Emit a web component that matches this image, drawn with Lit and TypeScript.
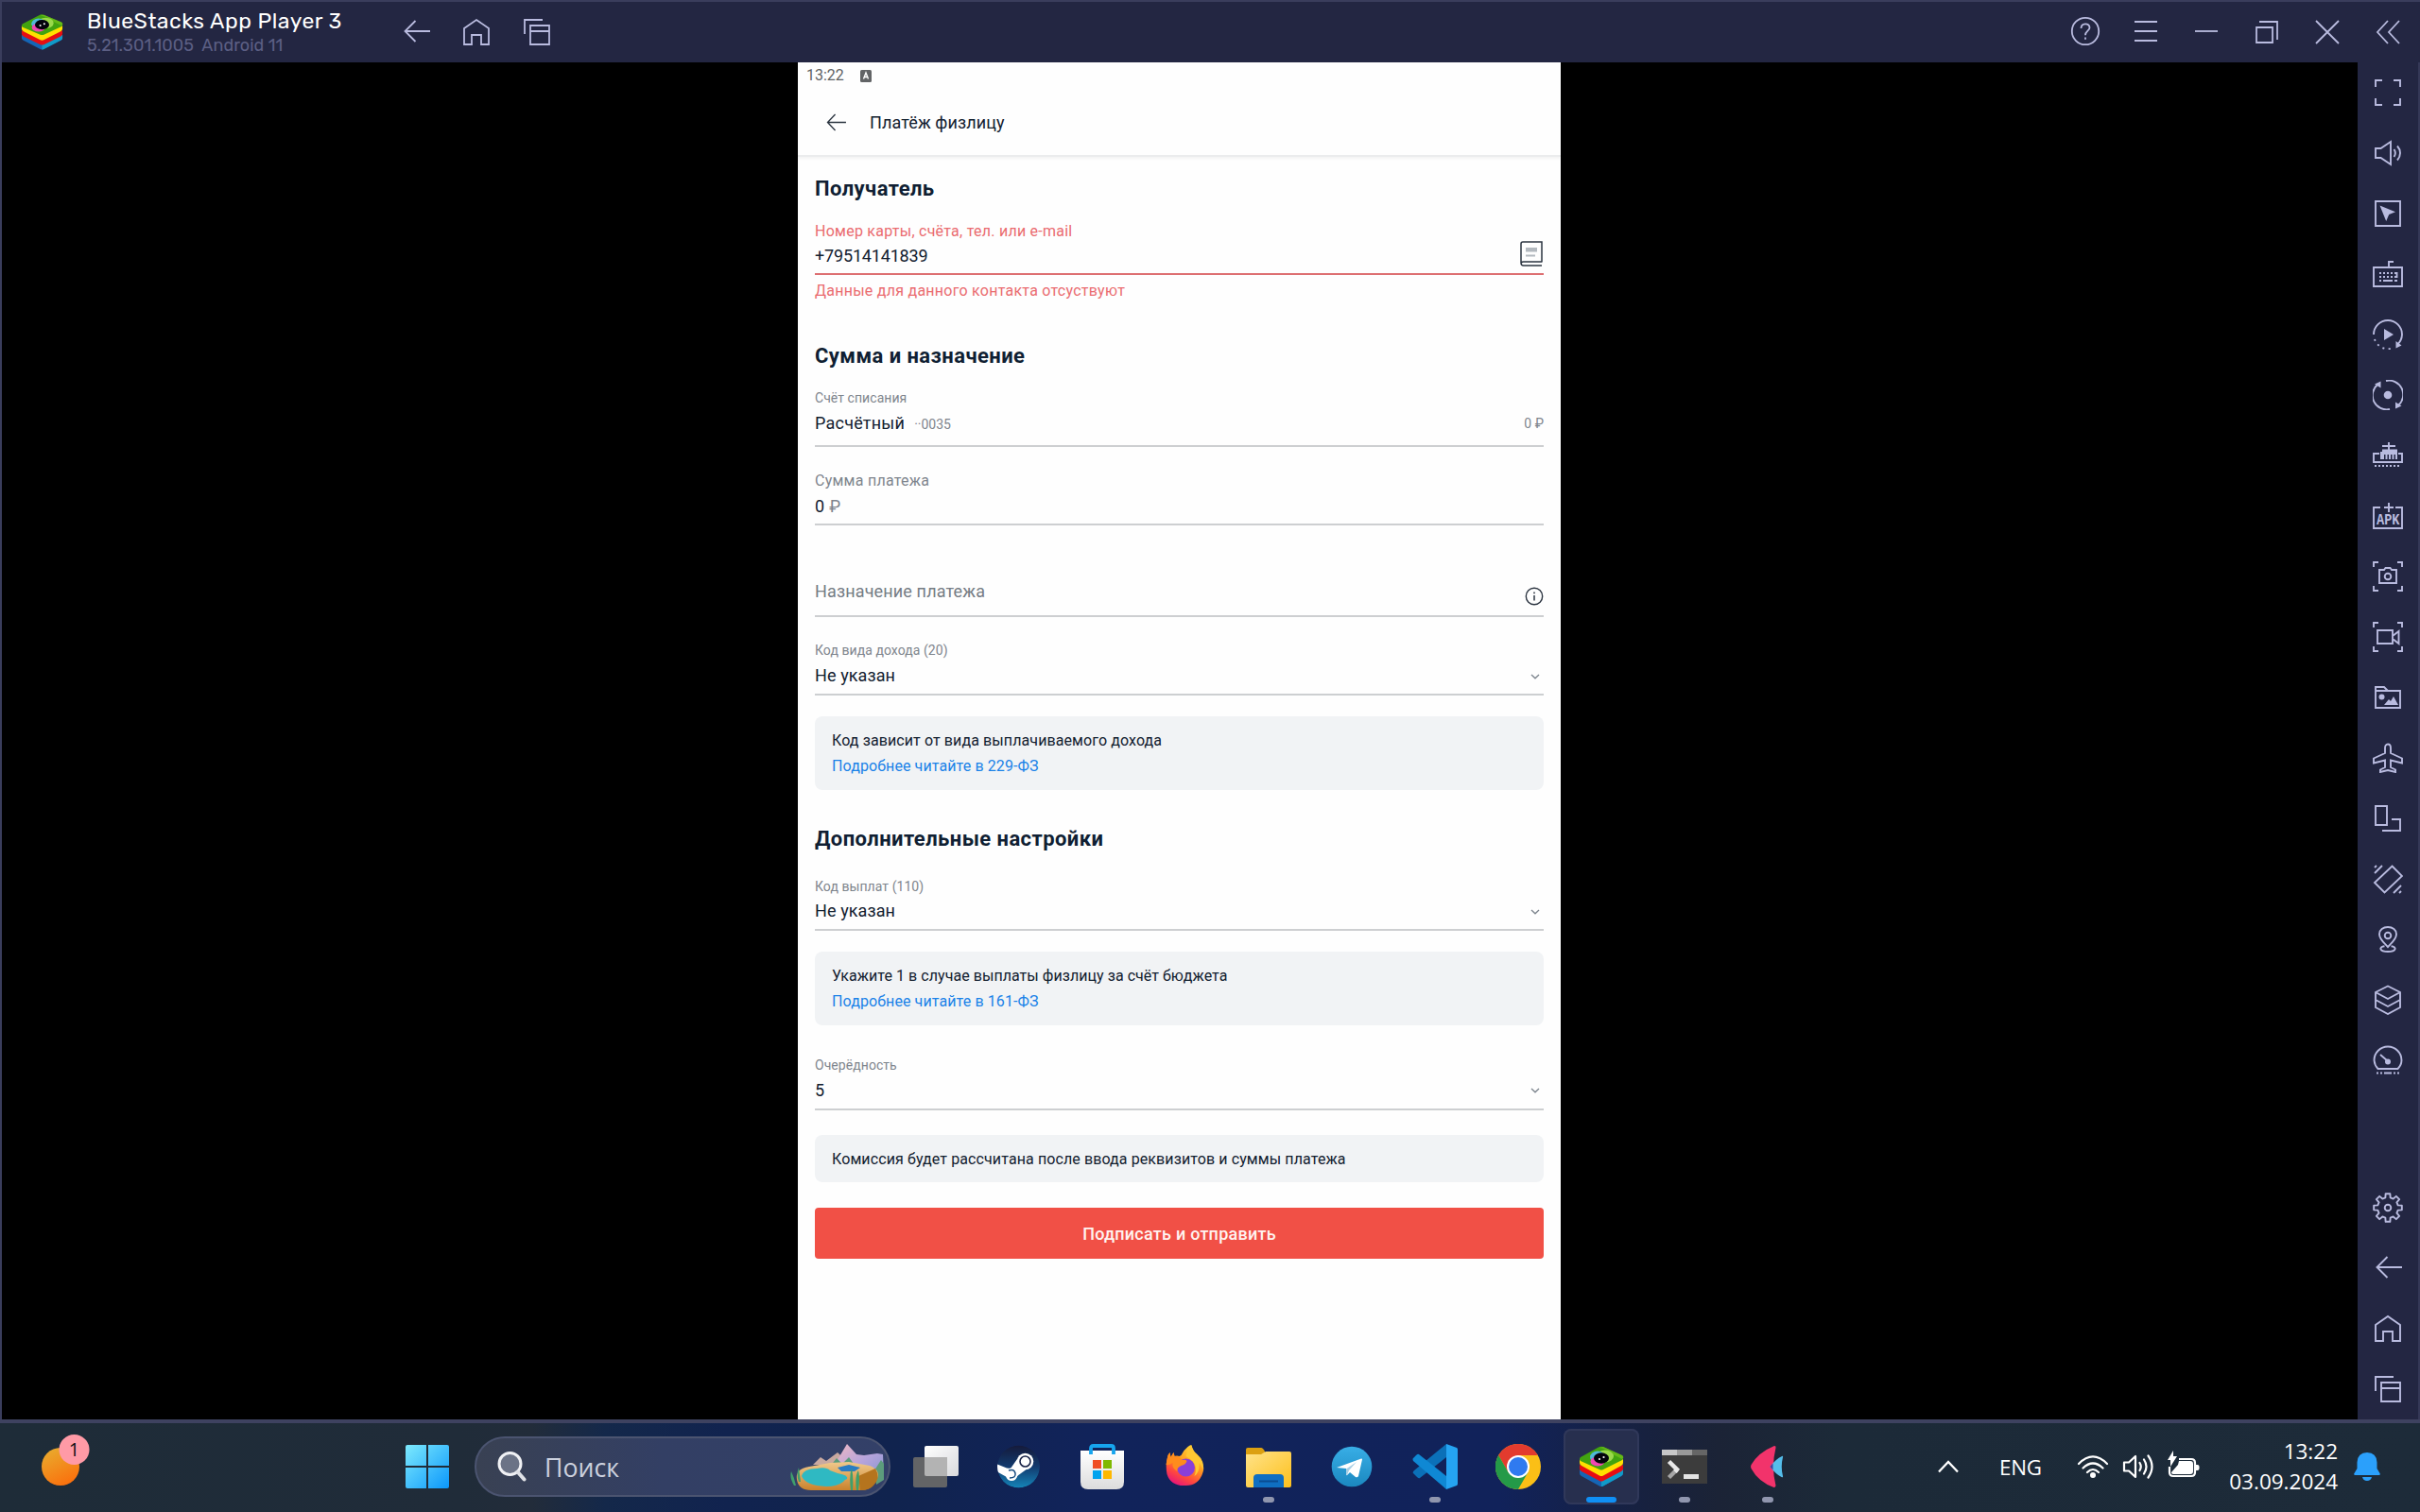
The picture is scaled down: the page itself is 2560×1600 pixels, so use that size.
import { LitElement, html, css, svg, TemplateResult, SVGTemplateResult } from "lit";
import { customElement } from "lit/decorators.js";

type Glyph = SVGTemplateResult;

/* Closed outline of a gear centred on the 32 x 32 grid. */
function gearPath(teeth: number, outer: number, inner: number): string {
  const step = 360 / teeth;
  const pts: string[] = [];
  for (let i = 0; i < teeth; i++) {
    for (const [offset, r] of [[-14, inner], [-9, outer], [9, outer], [14, inner]]) {
      const a = ((i * step + offset - 90) * Math.PI) / 180;
      pts.push(`${(16 + r * Math.cos(a)).toFixed(2)} ${(16 + r * Math.sin(a)).toFixed(2)}`);
    }
  }
  return `M${pts.join("L")}z`;
}

/* Outline glyphs, all drawn on a 32 x 32 grid. */
const home = svg`<path d="M3 29V12L16 3l13 9v17h-8V19H11v10z"/>`;
const copies = svg`<path d="M22 3H3v15M9 9h20v20H9zM9 15h20"/>`;
const back = svg`<path d="M31 15H5M15.500 4L4.500 15l11 11"/>`;
const help = svg`<circle cx="16" cy="16" r="14.2"/><path d="M11.500 13c0-6 9-6 9-.8 0 3.600-4.500 3.400-4.500 8M16 22.500v2.200"/>`;
const menu = svg`<path d="M4 6h24M4 16h24M4 26h24"/>`;
const minimize = svg`<path d="M4 16h24"/>`;
const restore = svg`<path d="M5 12h17v16H5zM8 6h19v19"/>`;
const close = svg`<path d="M4 5l24 24M28 5L4 29"/>`;
const collapse = svg`<path d="M16 5L5 17l11 12M28 5L17 17l11 12"/>`;

const fullscreen = svg`<path d="M3 10V3h7M22 3h7v7M29 22v7h-7M10 29H3v-7"/>`;
const volume = svg`<path d="M3 11h5.500L19 4v24L8.500 21H3zM22.500 12c1.700 2.500 1.700 5.500 0 8M26 8.500c4 4.500 4 10.500 0 15"/>`;
const cursor = svg`<path d="M3 3h26v26H3z"/><path class="solid" d="M7.500 7.500L24 14.300l-6.800 2.600-3 7z"/>`;
const keyboard = svg`<path d="M1 9h30v20H1zM17 9V3h5"/><path stroke-dasharray="2 2" d="M7 15h18M7 19h18"/><path d="M7 23h2M11 23h10M23 23h3M25.500 14v6"/>`;
const macroPlay = svg`<path d="M1 16a15 15 0 0 1 30 0c0 4-1.500 7-4.500 10.500"/><path stroke-dasharray="2 4.300" d="M2 21a15 15 0 0 0 20 9"/><path class="solid" d="M12 10l10 6-10 6zM24.500 23v7.500l6-3z"/>`;
const record = svg`<path d="M14 1a15 15 0 0 1 13 26M18 31A15 15 0 0 1 5 5"/><circle class="solid" cx="16" cy="16" r="4.300"/><path class="solid" d="M24 23.500v7l6.500-3zM8.500 8.500v-7l-6.500 3z"/>`;
const instances = svg`<path d="M17 2v8M10 6h14M7 14H1v9h30v-9h-4"/><path class="solid" d="M8 20v-8h2V9.500h16V20h-2v-5h-1.500v5h-2v-5H19v5h-2v-5h-1.500v5h-2v-5H12v5z"/><path stroke-dasharray="2 2" d="M2 27h28"/>`;
const apk = svg`<path d="M8 7H1v22h30V7h-7M17 2v10M12 7h10"/><text class="apk" x="4" y="25" textLength="24.500" lengthAdjust="spacingAndGlyphs">APK</text>`;
const camera = svg`<path d="M1 6V1h5M26 1h5v5M31 26v5h-5M6 31H1v-5M7 9h5l1.500-2h5L20 9h5v14H7z"/><circle cx="16" cy="16" r="3.300"/>`;
const video = svg`<path d="M1 6V1h5M26 1h5v5M31 26v5h-5M6 31H1v-5M5 9h16v14H5zM21 15l6.500-5v13L21 18z"/>`;
const media = svg`<path d="M3 27V5h9l4 4h13v18zM3 9h13"/><circle class="solid" cx="9.500" cy="15.500" r="3"/><path class="solid" d="M12 24l5-6 2 2 3-5 5 9z"/>`;
const plane = svg`<path d="M16 1.500c2 0 3 2 3 4v5.500l12 5.500v5L19 18.500V26l5 2.500V31l-8-2-8 2v-2.500l5-2.500v-7.500L1 21.500v-5l12-5.500V5.500c0-2 1-4 3-4z"/>`;
const sync = svg`<path d="M3 3h12v20H3zM20 17h9v12H10"/>`;
const shake = svg`<path d="M20.500 2.500L31 13 12.500 30.500 2 20zM2 10l8-8M2 4l2-2M22 31l8-8M28 31l2-2"/>`;
const pin = svg`<path d="M16 24c-4-4.500-9-8-9-13.500C7 6 11 3 16 3s9 3 9 7.500c0 5.500-5 9-9 13.500z"/><circle cx="16" cy="12" r="3.300"/><path d="M12.500 23.300C6 24 7 29 16 29s10-5 3.500-5.700"/>`;
const layers = svg`<path d="M3 8l13-6.500L29 8v16l-13 7-13-7zM3 8l13 7 13-7M3 16l13 7 13-7"/>`;
const gauge = svg`<path d="M5.500 25A15 15 0 0 1 1.500 16a14.500 14.500 0 0 1 29 0c0 3.500-1.500 6.500-4 9zM8 10l8 7"/><circle class="solid" cx="16" cy="17.500" r="3"/><path stroke-dasharray="2 2 2 2 8 2 2 2 2 2" d="M4 29.500h25"/>`;
const gear = svg`<path stroke-linejoin="round" d=${gearPath(8, 15, 11)}/><circle cx="16" cy="16" r="3.300"/>`;

const outline = (g: Glyph): TemplateResult => html`<svg class="ico" viewBox="0 0 32 32">${g}</svg>`;

/* App logos for the taskbar, drawn on a 48 x 48 grid. */
const stack = svg`
  <path fill="#1565b5" d="M1 31v-4l23 10 23-10v4q0 2-2 3L26 44.500q-2 1-4 0L3 34q-2-1-2-3z"/>
  <path fill="#109ac8" d="M24 38l23-11v4q0 2-2 3L26 44.500q-1 .6-2 .6z"/>
  <path fill="#e60d12" d="M1 26v-4l23 10 23-10v4q0 2-2 3L26 39q-2 1-4 0L3 29q-2-1-2-3z"/>
  <path fill="#ffe000" d="M1 20v-4l23 10 23-10v4q0 2-2 3L26 33.500q-2 1-4 0L3 23q-2-1-2-3z"/>
  <path fill="#41a30f" d="M2 14L20 4q3-2 6-1l20 9q2.500 2 0 5L26 27q-2 1-4 0L2 18q-2-2 0-4z"/>
  <path fill="#7cc81c" d="M26 3l20 9q2.500 2 0 4L34 10q-4-5-12-6z" opacity=".6"/>
  <ellipse cx="28" cy="13" rx="9" ry="6.500" fill="#9ad84a"/>
  <ellipse cx="20" cy="14" rx="8" ry="6.500" fill="#4fb8d8"/>
  <ellipse cx="20" cy="18.500" rx="7.500" ry="5" fill="#f047b2"/>
  <ellipse cx="24" cy="15" rx="8" ry="5.800" fill="#04040c"/>
  <circle cx="22" cy="16" r="1.100" fill="#fff"/><circle cx="26.500" cy="14" r="1.100" fill="#fff"/>`;

const taskView = svg`
  <defs><linearGradient id="tv" x2="1" y2="1"><stop stop-color="#fff"/><stop offset="1" stop-color="#d9dadd"/></linearGradient></defs>
  <rect x="12" y="2" width="36" height="32" rx="2" fill="url(#tv)"/>
  <rect x="0" y="14" width="36" height="32" rx="2" fill="#6d6b68" opacity=".9"/>
  <path d="M12 14h24v20H14q-2 0-2-2z" fill="#b3b3b3"/>`;
const steam = svg`
  <defs><linearGradient id="st" x2="0" y2="1"><stop stop-color="#151a3a"/><stop offset=".5" stop-color="#123a6e"/><stop offset="1" stop-color="#1585b8"/></linearGradient>
  <clipPath id="stc"><circle cx="23.500" cy="24" r="22.500"/></clipPath></defs>
  <g clip-path="url(#stc)"><circle cx="23.500" cy="24" r="22.500" fill="url(#st)"/>
  <path fill="#fff" d="M0 21l11 4.500 4 .5 7-10 11 10-11 8q-1 5-6 5-4 0-6-4.500L0 29z"/>
  <circle cx="30.500" cy="18.500" r="8.800" fill="#fff"/><circle cx="30.500" cy="18.500" r="5.500" fill="none" stroke="#1a2448" stroke-width="1.600"/>
  <circle cx="16.500" cy="31.500" r="6.300" fill="#fff"/><path d="M13 28q6-2 7 3t-6 5" fill="none" stroke="#174c80" stroke-width="1.500"/></g>`;
const store = svg`
  <defs><linearGradient id="so" x2="0" y2="1"><stop stop-color="#fff"/><stop offset="1" stop-color="#dcdcdc"/></linearGradient></defs>
  <path fill="url(#so)" d="M1 7h46v33q0 8-8 8H9q-8 0-8-8z"/>
  <path fill="none" stroke="#16a5ee" stroke-width="3.800" d="M12 11V4.500q0-2.500 2.500-2.500h19q2.500 0 2.500 2.500V11"/>
  <path fill="#f04e23" d="M14 17h9v9h-9z"/><path fill="#7fb900" d="M25 17h9v9h-9z"/><path fill="#00a3ee" d="M14 28h9v9h-9z"/><path fill="#feb800" d="M25 28h9v9h-9z"/>`;
const firefox = svg`
  <defs><linearGradient id="ff" x1=".8" y1="0" x2=".3" y2="1"><stop stop-color="#ffe43a"/><stop offset=".45" stop-color="#ff9a1f"/><stop offset=".75" stop-color="#ff4a3c"/><stop offset="1" stop-color="#e8157a"/></linearGradient></defs>
  <g transform="translate(.5 0)"><path fill="url(#ff)" d="M5 12l2-3 1 5 3-5 1 4q3-1 5 0l2-1q2-5 7-9l3-2 4 8 3 3q9 9 6 18-4 14-18 14Q8 45 4 32 2 21 5 12z"/>
  <circle cx="24" cy="25" r="9.500" fill="#8a3fd8"/>
  <path fill="#ff8c1c" d="M5 12l2-3 1 5 3-5 1 4q4-1 8 4 4-1 5 1-1 4-6 5-5 2-4 6-6-3-5-9-5 3-7 2z"/>
  <path fill="#ffc832" d="M24 13l2-8q1-2 4-4 1 6 6 10 8 7 6 16-2-5-4-7 1 10-5 14 3-8 0-13-3-5-9-8z"/></g>`;
const folder = svg`
  <defs><linearGradient id="fo" x2="1" y2="1"><stop stop-color="#ffe38a"/><stop offset="1" stop-color="#fdc01c"/></linearGradient></defs>
  <path fill="#dca011" d="M0 6q0-2 2-2h14q2 0 4 4v4H0z"/>
  <path fill="url(#fo)" d="M0 11h16l5-3h25q2 0 2 2v34q0 2-2 2H2q-2 0-2-2z"/>
  <path fill="#0f6fc2" d="M8 46V36q0-4 4-4h24q4 0 4 4v10z"/><path stroke="#0a4c92" stroke-width="2" d="M14 39.500h20"/>`;
const telegram = svg`
  <defs><linearGradient id="tg" x2="0" y2="1"><stop stop-color="#38aee6"/><stop offset="1" stop-color="#1b88c0"/></linearGradient></defs>
  <circle cx="24" cy="24" r="21.300" fill="url(#tg)"/>
  <path fill="#fff" d="M8 25l26-9.500q1-.3 1 1L31 34q-1 2-3 1l-6-5-3 3q-1 .5-1-1v-6z"/>
  <path fill="#a9cfe4" d="M18 26.500L29 19l-8 9-2 5q-1 0-1-1z"/>`;
const vscode = svg`
  <path fill="#0b70b8" d="M36 0v14L8 36q-1 1-3-1l-4-4q-1-1 1-3z"/>
  <path fill="#0f88d4" d="M36 48V34L7 11q-1-1-3 1l-3 3q-1 1 0 3z"/>
  <path fill="#25a4f2" d="M36 0l11 4q1 .5 1 2v36q0 1.500-1 2l-11 4z"/>`;
const chrome = svg`
  <circle cx="24" cy="24" r="24" fill="#fbbf16"/>
  <path fill="#e33b2e" d="M3.200 12A24 24 0 0 1 44.800 12H24L13.600 30z"/>
  <path fill="#249a48" d="M3.200 12A24 24 0 0 0 24 48l10.400-18H24L13.600 30z"/>
  <circle cx="24" cy="24" r="12" fill="#fff"/><circle cx="24" cy="24" r="10" fill="#2f7af0"/>`;
const terminal = svg`
  <path fill="#3c3c3c" d="M0 6h48v36H0z"/><path fill="#c6c6c6" d="M0 6h16v6H0z"/><path fill="#999" d="M16 6h16v6H16z"/><path fill="#666" d="M32 6h16v6H32z"/>
  <path fill="none" stroke="#a6a6a6" stroke-width="4.500" d="M7.500 35.500L16 27"/><path fill="none" stroke="#e8e8e8" stroke-width="4.500" d="M7.500 18.500L16 27l-2 2.500"/>
  <path fill="#e3e3e3" d="M23 32h16v5H23z"/>`;
const fish = svg`
  <path fill="#f2336b" d="M31 2q2 0 1.500 2-5 20 0 40 0 2-2 2Q14 40 6.500 26q-1-2 0-4Q14 9 31 2z"/>
  <path fill="#55bdea" d="M39 13q1.500-1 1 1-2.500 10 0 20 .5 2-1.500 1-6-3-12-11 6-8 12.500-11z"/>
  <path fill="#4a3f9c" d="M26.500 24q2-3 3-3.500v7q-1-.5-3-3.500z"/>`;

interface App { name: string; art: Glyph; state: "idle" | "open" | "active"; }
const apps: App[] = [
  { name: "taskview", art: taskView, state: "idle" },
  { name: "steam", art: steam, state: "idle" },
  { name: "store", art: store, state: "idle" },
  { name: "firefox", art: firefox, state: "idle" },
  { name: "explorer", art: folder, state: "open" },
  { name: "telegram", art: telegram, state: "idle" },
  { name: "code", art: vscode, state: "open" },
  { name: "chrome", art: chrome, state: "idle" },
  { name: "bluestacks", art: stack, state: "active" },
  { name: "terminal", art: terminal, state: "open" },
  { name: "fish", art: fish, state: "open" },
];

@customElement("emulator-header")
class EmulatorHeader extends LitElement {
  static styles = css`
    :host { display: flex; align-items: center; height: 64px; padding: 0 18px 0 20px; background: #232642; color: #fff; font-family: Rubik, Roboto, sans-serif; }
    .logo { width: 45px; height: 42px; }
    .names { margin-left: 25px; width: 332px; }
    .title { font-size: 23px; line-height: 28px; letter-spacing: .48px; white-space: pre; }
    .version { font-size: 18px; line-height: 24px; color: #5c5f84; white-space: pre; letter-spacing: .04px; }
    .group { display: flex; gap: 32px; }
    .right { margin-left: auto; padding-bottom: 2px; }
    .ico { width: 32px; height: 32px; fill: none; stroke: #b9bbdf; stroke-width: 1.800; display: block; }
  `;
  render() {
    return html`
      <svg class="logo" viewBox="0 0 48 48" preserveAspectRatio="none">${stack}</svg>
      <div class="names">
        <div class="title">BlueStacks App Player 3</div>
        <div class="version">5.21.301.1005  Android 11</div>
      </div>
      <div class="group">${[back, home, copies].map(outline)}</div>
      <div class="group right">${[help, menu, minimize, restore, close, collapse].map(outline)}</div>`;
  }
}

@customElement("emulator-sidebar")
class EmulatorSidebar extends LitElement {
  static styles = css`
    :host { display: flex; flex-direction: column; justify-content: space-between; width: 66px; background: #232642; border-right: 2px solid #353857; box-sizing: border-box; }
    .cell { height: 64px; display: grid; place-items: center; }
    .ico { width: 32px; height: 32px; fill: none; stroke: #b9bbdf; stroke-width: 1.900; display: block; }
    .solid { fill: #b9bbdf; stroke: none; }
    .apk { fill: #b9bbdf; stroke: none; font: 700 16px "Liberation Mono", monospace; }
  `;
  render() {
    const cell = (g: Glyph) => html`<div class="cell">${outline(g)}</div>`;
    return html`
      <div>${[fullscreen, volume, cursor, keyboard, macroPlay, record, instances, apk, camera, video, media, plane, sync, shake, pin, layers, gauge].map(cell)}</div>
      <div>${[gear, back, home, copies].map(cell)}</div>`;
  }
}

@customElement("payment-screen")
class PaymentScreen extends LitElement {
  static styles = css`
    :host { display: block; width: 807px; height: 1436px; background: #fefefe; color: #12202f; font: 18px/24px Roboto, sans-serif; letter-spacing: .1px; }
    .status { display: flex; align-items: center; gap: 17px; height: 26px; padding: 2px 0 0 9px; box-sizing: border-box; font-size: 16px; color: #606264; letter-spacing: 0; }
    .status svg { width: 12px; height: 13px; }
    .bar { display: flex; align-items: center; height: 74px; padding-left: 30px; gap: 25px; box-sizing: border-box; border-bottom: 2px solid #ebeced; clip-path: inset(0 0 -6px 0); box-shadow: 0 2px 3px #f3f3f4; }
    .bar svg { width: 21px; height: 19px; margin-top: 3px; fill: none; stroke: #2b3440; stroke-width: 1.400; }
    .bar span { margin-top: 3px; }
    .form { padding: 0 18px; }
    h2 { margin: 0; font-size: 22px; line-height: 24px; font-weight: 700; letter-spacing: .43px; color: #101f33; }
    .h-recipient { margin-top: 22px; }
    .h-amount { margin-top: 45px; }
    .h-extra { margin-top: 40.500px; }
    .field { display: flex; flex-direction: column; border-bottom: 2px solid #cdcfd1; box-sizing: border-box; }
    .label { color: #7e858d; font-size: 14px; letter-spacing: .06px; }
    .label.big { font-size: 16px; letter-spacing: .25px; }
    .value { display: flex; align-items: center; justify-content: space-between; height: 24px; }
    .recipient { margin-top: 20.500px; height: 58.500px; gap: 2.500px; border-bottom: 2px solid #dd6f72; }
    .recipient .label { color: #ea6c70; }
    .recipient .value { letter-spacing: -.17px; }
    .error { margin-top: 4.500px; font-size: 16px; letter-spacing: .25px; color: #ea6c70; }
    .account { margin-top: 20.500px; height: 64px; gap: 3px; }
    .account .value { letter-spacing: .23px; }
    .muted { color: #7e858d; font-size: 14px; letter-spacing: 0; }
    .mask { margin-left: 10px; }
    .amount { margin-top: 23.500px; height: 59.500px; gap: 3.500px; }
    .amount .value { justify-content: flex-start; gap: 5px; letter-spacing: 0; }
    .rub { color: #7e858d; }
    .purpose { margin-top: 58px; height: 38.500px; }
    .purpose .value { color: #757c84; letter-spacing: .14px; }
    .income { margin-top: 23.500px; height: 59.500px; gap: 3px; }
    .payout { margin-top: 25.500px; height: 59px; gap: 2.500px; }
    .order { margin-top: 30.500px; height: 59.500px; gap: 2.500px; }
    .book { width: 24px; height: 28px; margin: -7px 1px 0 0; }
    .info { width: 20px; height: 20px; margin-top: 10px; }
    .chevron { width: 10px; height: 6px; margin-right: 4px; margin-top: 1px; }
    .note { margin-top: 22.500px; padding: 13.500px 18px; border-radius: 8px; background: #f1f3f5; font-size: 16px; letter-spacing: .1px; display: flex; flex-direction: column; gap: 3.500px; height: 77.500px; box-sizing: border-box; }
    .note.tight { letter-spacing: .05px; }
    .note.single { margin-top: 26.500px; height: 50px; }
    .link { color: #1a82e8; letter-spacing: .1px; }
    .submit { margin-top: 27px; display: grid; place-items: center; height: 54px; width: 100%; padding: 2px 0 0; box-sizing: border-box; border: 0; border-radius: 4px; background: #f15046; color: #fff3f0; font: 500 18px/24px Roboto, sans-serif; letter-spacing: .25px; }
  `;
  private chevron() {
    return html`<svg class="chevron" viewBox="0 0 10 6"><path d="M1 1l4 3.800L9 1" fill="none" stroke="#7c848d" stroke-width="1.300"/></svg>`;
  }
  private select(kind: string, label: string, value: string) {
    return html`<div class="field ${kind}"><div class="label">${label}</div><div class="value"><span>${value}</span>${this.chevron()}</div></div>`;
  }
  render() {
    return html`
      <div class="status"><span>13:22</span>
        <svg viewBox="0 0 12 13"><rect width="12" height="13" rx="1.500" fill="#626466"/><path d="M3.500 9.500L6 3l2.500 6.500M4.500 7.500h3" fill="none" stroke="#fff" stroke-width="1.400"/></svg>
      </div>
      <div class="bar">
        <svg viewBox="0 0 22 20"><path d="M22 10H1.500M10 1L1.500 10l8.500 9"/></svg>
        <span>Платёж физлицу</span>
      </div>
      <div class="form">
        <h2 class="h-recipient">Получатель</h2>
        <div class="field recipient">
          <div class="label big">Номер карты, счёта, тел. или e-mail</div>
          <div class="value"><span>+79514141839</span>
            <svg class="book" viewBox="0 0 24 28"><path d="M23 23.500V2H3Q1 2 1 4v20q0 3 2.500 3H23M1.500 24q.5-1 2-1H23" fill="none" stroke="#2b3440" stroke-width="1.500"/><path d="M6 8h12v4.500H6zM6 15.500h10v2H6z" fill="#b3b9bf"/></svg>
          </div>
        </div>
        <div class="error">Данные для данного контакта отсуствуют</div>
        <h2 class="h-amount">Сумма и назначение</h2>
        <div class="field account">
          <div class="label">Счёт списания</div>
          <div class="value"><span>Расчётный<span class="muted mask">··0035</span></span><span class="muted">0 ₽</span></div>
        </div>
        <div class="field amount">
          <div class="label big">Сумма платежа</div>
          <div class="value"><span>0</span><span class="rub">₽</span></div>
        </div>
        <div class="field purpose">
          <div class="value"><span>Назначение платежа</span>
            <svg class="info" viewBox="0 0 20 20"><circle cx="10" cy="10" r="8.700" fill="none" stroke="#2b3440" stroke-width="1.400"/><path d="M10 9v5.500M10 5.500v1.800" stroke="#2b3440" stroke-width="1.500"/></svg>
          </div>
        </div>
        ${this.select("income", "Код вида дохода (20)", "Не указан")}
        <div class="note"><span>Код зависит от вида выплачиваемого дохода</span><span class="link">Подробнее читайте в 229-ФЗ</span></div>
        <h2 class="h-extra">Дополнительные настройки</h2>
        ${this.select("payout", "Код выплат (110)", "Не указан")}
        <div class="note tight"><span>Укажите 1 в случае выплаты физлицу за счёт бюджета</span><span class="link">Подробнее читайте в 161-ФЗ</span></div>
        ${this.select("order", "Очерёдность", "5")}
        <div class="note single">Комиссия будет рассчитана после ввода реквизитов и суммы платежа</div>
        <button class="submit">Подписать и отправить</button>
      </div>`;
  }
}

@customElement("windows-taskbar")
class WindowsTaskbar extends LitElement {
  static styles = css`
    :host { display: flex; align-items: center; height: 98px; box-sizing: border-box; border-top: 4px solid #3e4260; padding: 0 42px 2px 44px; color: #fff; font-family: "Open Sans", "Noto Sans", sans-serif;
      background: linear-gradient(90deg, #1e2c38 0, #202c39 19%, #222c3a 22%, #14284a 25%, #11234f 30%, #10234e 37%, #11235a 45%, #11225a 62%, #17213f 68%, #1b2336 71%, #1c2a38 76%, #1d2b39 100%); }
    svg { display: block; flex: none; }
    .weather { width: 52px; height: 60px; margin-top: -12px; }
    .weather text { font: 20px "Open Sans", sans-serif; }
    .start { width: 46px; height: 46px; margin-left: 333px; }
    .search { display: flex; align-items: center; width: 440px; height: 64px; margin-left: 27px; padding: 0 2px 0 21px; box-sizing: border-box; border: 2px solid #4b5470; border-radius: 32px; background: linear-gradient(90deg, #394153, #333f64 45%, #334068); color: #ccd1de; font-size: 26.700px; }
    .lens { width: 32px; height: 34px; margin-right: 19px; }
    .scene { width: 102px; height: 52px; margin-left: auto; }
    .apps { display: flex; margin-left: 4px; }
    .app { width: 88px; display: grid; place-items: center; }
    .tile { width: 80px; height: 80px; box-sizing: border-box; display: grid; grid-template-rows: 14px 48px 8px 6px; justify-items: center; padding-top: 2px; border-radius: 8px; }
    .tile svg { width: 48px; height: 48px; grid-row: 2; }
    .tile i { grid-row: 4; width: 12px; height: 6px; border-radius: 3px; background: #9096ae; }
    .tile.idle i { display: none; }
    .tile.active { background: #272f4e; box-shadow: inset 0 0 0 2px #30385a; }
    .tile.active i { width: 32px; background: #0f8ff5; }
    .tray { display: flex; align-items: center; margin-left: auto; }
    .up { width: 24px; height: 14px; }
    .lang { margin-left: 42px; width: 82px; font-size: 22.300px; letter-spacing: -.2px; }
    .net { width: 34px; height: 28px; }
    .vol { width: 34px; height: 30px; margin-left: 14px; }
    .bat { width: 34px; height: 30px; margin-left: 14px; margin-top: -4px; }
    .clock { margin-left: 29px; width: 117px; text-align: right; font-size: 22.500px; line-height: 32px; white-space: nowrap; }
    .bell { width: 28px; height: 32px; margin-left: 17px; }
  `;
  render() {
    return html`
      <svg class="weather" viewBox="0 0 52 60">
        <defs><linearGradient id="sun" x1=".3" x2=".8" y2="1"><stop stop-color="#eaa92c"/><stop offset="1" stop-color="#fb6c0b"/></linearGradient></defs>
        <circle cx="20" cy="36" r="20" fill="url(#sun)"/><circle cx="34.500" cy="18" r="16" fill="#ff9aa6"/><text x="34.500" y="25" text-anchor="middle" fill="#111">1</text>
      </svg>
      <svg class="start" viewBox="0 0 46 46">
        <defs><linearGradient id="win" gradientUnits="userSpaceOnUse" x2="46" y2="46"><stop stop-color="#7deafd"/><stop offset="1" stop-color="#0b97fb"/></linearGradient></defs>
        <path fill="url(#win)" d="M2 0h20v22H0V2q0-2 2-2zM24 0h20q2 0 2 2v20H24zM0 24h22v22H2q-2 0-2-2zM24 24h22v20q0 2-2 2H24z"/>
      </svg>
      <div class="search">
        <svg class="lens" viewBox="0 0 32 34"><circle cx="14.500" cy="14" r="11.500" fill="#6b7386" stroke="#f0f1f4" stroke-width="3"/><path d="M22.500 22.500l7 8" stroke="#dfe1e6" stroke-width="4" stroke-linecap="round"/></svg>
        <span>Поиск</span>
        <svg class="scene" viewBox="0 0 102 52">
          <defs><linearGradient id="mt" x2="1" y2="1"><stop stop-color="#f0b9c2"/><stop offset=".5" stop-color="#b7a4dc"/><stop offset="1" stop-color="#7f93cf"/></linearGradient>
          <linearGradient id="sand" x2="0" y2="1"><stop stop-color="#f0c98c"/><stop offset="1" stop-color="#c9822c"/></linearGradient></defs>
          <path fill="#c9a9a0" d="M24 24l8-8 6 4 12-9 14 13z"/>
          <path fill="url(#mt)" d="M48 22L60 2l10 11 8 1 14-2 6 1 1 22-29 6z"/>
          <path fill="#5c9c7c" d="M42 26l7-9 6 6 7-7 8 11zM89 30l7-11 3 4v17l-8 5z"/>
          <path fill="url(#sand)" d="M7 40q-2-12 13-14l22-4 20-1 22 4q13 5 7 16-5 10-17 10H22Q9 51 7 40z"/>
          <path fill="#b5741e" d="M72 36l18-8q6 10-2 18-4 5-14 5z"/>
          <path fill="#2fb9c2" d="M12 36q2-8 16-8 10-2 14 2l8 3q12 2 10 6-3 1-4 3-6 5-18 5-22-1-26-11z"/>
          <path fill="#2a7cc4" d="M50 27l12-3 12 3-6 4H54z"/>
          <path fill="#3f9f6c" d="M4 46Q-1 38 1 31q3 6 5 15zM9 42Q6 34 9 27q1 8 2 15zM64 51q-2-15 1-24 2 11 1 24zM70 51q-2-15 2-21 2 8 0 21z"/>
        </svg>
      </div>
      <div class="apps">
        ${apps.map((a) => html`<div class="app"><div class="tile ${a.state}"><svg viewBox="0 0 48 48">${a.art}</svg><i></i></div></div>`)}
      </div>
      <div class="tray">
        <svg class="up" viewBox="0 0 24 14"><path d="M2 12.500L12 2l10 10.500" fill="none" stroke="#fff" stroke-width="2.300"/></svg>
        <span class="lang">ENG</span>
        <svg class="net" viewBox="0 0 34 28"><g fill="none" stroke="#fff" stroke-width="2.200" stroke-linecap="round"><path d="M2 11q15-15 30 0M6.500 15.500q10.500-10 21 0M11 20q6-6 12 0"/></g><circle cx="17" cy="23" r="3" fill="#fff"/></svg>
        <svg class="vol" viewBox="0 0 34 30"><g fill="none" stroke="#fff" stroke-width="2.200" stroke-linecap="round" stroke-linejoin="round"><path d="M2 10.500h5L14 4v22l-7-6.500H2zM18.500 11q2.500 4 0 8M23 7.500q5 7.500 0 15M27.500 3.500q8 11.500 0 23"/></g></svg>
        <svg class="bat" viewBox="0 0 34 30"><path d="M12 9h13q4 0 4 4v10q0 4-4 4H6q-4 0-4-4v-6" fill="none" stroke="#fff" stroke-width="2.200"/><path fill="#fff" d="M12 11h12q3 0 3 3v8q0 3-3 3H7q-3 0-3-2l7-8zM30 15h1.500q2 0 2 2v2q0 2-2 2H30zM6 0v6h4L3 17v-7H0z"/></svg>
        <div class="clock"><div>13:22</div><div>03.09.2024</div></div>
        <svg class="bell" viewBox="0 0 28 32"><path fill="#2ba0fb" d="M14 1q10 0 10.500 10.500V18l3 5q1 2-1 2H1.500q-2 0-1-2l3-5v-6.500Q4 1 14 1zM9 27h10q-1 4-5 4t-5-4z"/></svg>
      </div>`;
  }
}

@customElement("app-root")
class AppRoot extends LitElement {
  static styles = css`
    :host { display: flex; flex-direction: column; width: 2560px; height: 1600px; overflow: hidden; background: #232642; }
    .window { display: flex; flex-direction: column; height: 1502px; box-sizing: border-box; border-top: 2px solid #3a3d5c; border-left: 2px solid #3a3d5c; }
    .work { display: flex; height: 1436px; }
    .stage { flex: 1; padding-left: 842px; background: #000; }
  `;
  render() {
    return html`
      <div class="window">
        <emulator-header></emulator-header>
        <div class="work">
          <div class="stage"><payment-screen></payment-screen></div>
          <emulator-sidebar></emulator-sidebar>
        </div>
      </div>
      <windows-taskbar></windows-taskbar>`;
  }
}
